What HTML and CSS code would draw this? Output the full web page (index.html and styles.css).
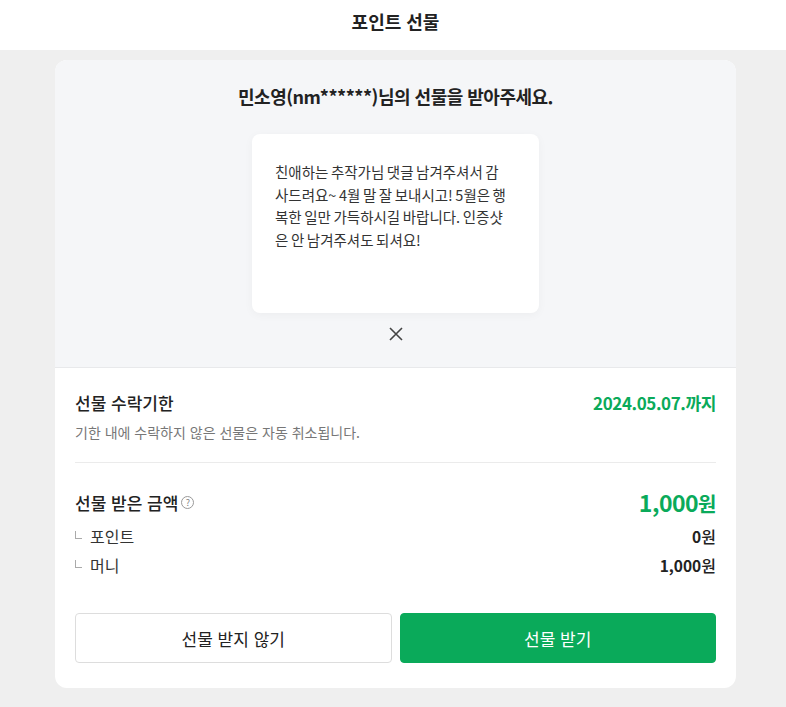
FILE: index.html
```html
<!DOCTYPE html>
<html lang="ko">
<head>
    <meta charset="UTF-8">
    <meta name="viewport" content="width=device-width, initial-scale=1.0">
    <title>포인트 선물</title>
    <link rel="stylesheet" href="styles.css">
</head>
<body>
    <header class="header">
        <h1>포인트 선물</h1>
    </header>
    <main class="page">
        <section class="card">
            <div class="gift">
                <h2 class="gift-title">민소영(nm******)님의 선물을 받아주세요.</h2>
                <div class="message">
                    <p>친애하는 추작가님 댓글 남겨주셔서 감사드려요~ 4월 말 잘 보내시고! 5월은 행복한 일만 가득하시길 바랍니다. 인증샷은 안 남겨주셔도 되셔요!</p>
                </div>
                <button class="close" aria-label="닫기">
                    <svg width="14" height="14" viewBox="0 0 14 14"><path d="M1 1L13 13M13 1L1 13" stroke="#444" stroke-width="1.6" fill="none"/></svg>
                </button>
            </div>
            <div class="info">
                <div class="block">
                    <div class="row">
                        <span class="label">선물 수락기한</span>
                        <span class="date">2024.05.07.까지</span>
                    </div>
                    <p class="note">기한 내에 수락하지 않은 선물은 자동 취소됩니다.</p>
                </div>
                <div class="block amounts">
                    <div class="row">
                        <span class="label">선물 받은 금액 <span class="help">?</span></span>
                        <span class="total">1,000<small>원</small></span>
                    </div>
                    <div class="row sub">
                        <span class="sub-label">포인트</span>
                        <span class="sub-value">0<small>원</small></span>
                    </div>
                    <div class="row sub">
                        <span class="sub-label">머니</span>
                        <span class="sub-value">1,000<small>원</small></span>
                    </div>
                </div>
                <div class="buttons">
                    <button class="btn btn-decline">선물 받지 않기</button>
                    <button class="btn btn-accept">선물 받기</button>
                </div>
            </div>
        </section>
    </main>
</body>
</html>
```

FILE: styles.css
```css
* {
    box-sizing: border-box;
}
body {
    margin: 0;
    background: #efefef;
    font-family: "Noto Sans CJK KR", "Noto Sans", sans-serif;
    color: #222;
}
.header {
    height: 50px;
    background: #fff;
    display: flex;
    align-items: center;
    justify-content: center;
    padding: 0 0 9px 5px;
}
.header h1 {
    margin: 0;
    font-size: 18px;
    font-weight: 700;
}
.page {
    padding: 10px 50px 20px 55px;
}
.card {
    background: #fff;
    border-radius: 12px;
    overflow: hidden;
}
.gift {
    background: #f5f6f8;
    border-bottom: 1px solid #e8e9eb;
    display: flex;
    flex-direction: column;
    align-items: center;
    padding: 22px 0 26px;
}
.gift-title {
    margin: 0;
    font-size: 18px;
    font-weight: 700;
    letter-spacing: -0.5px;
    line-height: 28px;
}
.message {
    margin-top: 24px;
    width: 287px;
    height: 179px;
    background: #fff;
    border-radius: 8px;
    box-shadow: 0 2px 10px rgba(0, 0, 0, 0.04);
    padding: 27px 31px 0 23px;
}
.message p {
    margin: 0;
    font-size: 14.5px;
    line-height: 22.7px;
    word-spacing: -1.5px;
    color: #333;
    word-break: break-all;
}
.close {
    margin-top: 14px;
    background: none;
    border: 0;
    padding: 0;
    width: 14px;
    height: 14px;
    cursor: pointer;
}
.close svg {
    display: block;
}
.info {
    padding: 22px 20px 25px;
}
.block {
    padding-bottom: 20px;
    border-bottom: 1px solid #ebebeb;
}
.row {
    display: flex;
    justify-content: space-between;
    align-items: center;
}
.label {
    font-size: 17px;
    font-weight: 500;
    display: flex;
    align-items: center;
    gap: 3px;
}
.date {
    font-size: 17px;
    font-weight: 700;
    color: #0aaa5a;
    letter-spacing: -0.4px;
}
.note {
    margin: 7px 0 0;
    font-size: 14px;
    color: #777;
}
.help {
    display: inline-flex;
    align-items: center;
    justify-content: center;
    width: 13px;
    height: 13px;
    border: 1px solid #999;
    border-radius: 50%;
    font-size: 9px;
    font-weight: 400;
    color: #888;
    line-height: 1;
}
.amounts {
    border-bottom: 0;
    padding-top: 22px;
    padding-bottom: 0;
}
.total {
    font-size: 23px;
    font-weight: 700;
    color: #0aaa5a;
    letter-spacing: -0.5px;
}
.total small {
    font-size: 20px;
}
.sub {
    margin-top: 5px;
}
.sub-label {
    font-size: 16px;
    color: #333;
    display: flex;
    align-items: center;
    gap: 8px;
}
.sub-label::before {
    content: "";
    width: 6px;
    height: 7px;
    border-left: 1px solid #aaa;
    border-bottom: 1px solid #aaa;
    margin-bottom: 2px;
}
.sub-value {
    font-size: 15.5px;
    font-weight: 700;
    color: #222;
}
.sub-value small {
    font-size: 16px;
    font-weight: 500;
}
.buttons {
    display: flex;
    gap: 8px;
    margin-top: 36px;
}
.btn {
    flex: 1;
    height: 50px;
    border-radius: 4px;
    font-family: inherit;
    font-size: 17px;
    cursor: pointer;
}
.btn-decline {
    background: #fff;
    border: 1px solid #ddd;
    color: #222;
}
.btn-accept {
    background: #0aaa5a;
    border: 1px solid #0aaa5a;
    color: #fff;
}
```
